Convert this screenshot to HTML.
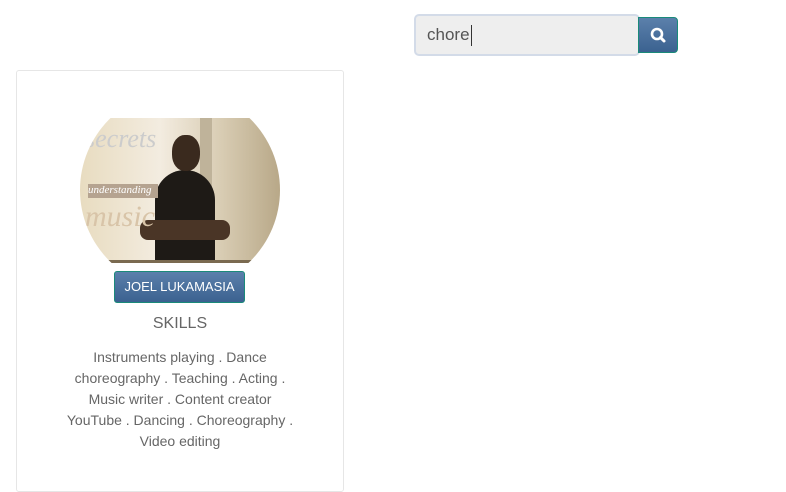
<!DOCTYPE html>
<html><head><style>
body{margin:0;width:786px;height:467px;background:#fff;font-family:"Liberation Sans",sans-serif;position:relative;overflow:hidden}
.inp{position:absolute;left:414px;top:14px;width:222px;height:38px;border:2px solid #d3dbe8;border-radius:5px;background:#eee;}
.inp span{position:absolute;left:11px;top:9px;font-size:17px;color:#555;}
.inp i{position:absolute;left:55px;top:9px;width:1px;height:21px;background:#333}
.btn{position:absolute;left:638px;top:17px;width:40px;height:36px;background:linear-gradient(#5b80ab,#3b6290);border:1px solid #1a8a7a;border-radius:0 4px 4px 0;box-sizing:border-box}
.card{position:absolute;left:16px;top:70px;width:326px;height:420px;border:1px solid #e6e6e6;border-radius:3px}
.pic{position:absolute;left:80px;top:118px;width:200px;height:145px;overflow:hidden}
.circ{position:absolute;left:0;top:-28px;width:200px;height:200px;border-radius:50%;overflow:hidden;background:linear-gradient(90deg,#e8dcc0,#f3ece0 40%,#d9cdb4 70%,#b8a888)}
.name{position:absolute;left:114px;top:271px;width:131px;height:32px;background:linear-gradient(#5b80ab,#3b6290);border:1px solid #1a8a7a;border-radius:3px;box-sizing:border-box;color:#fff;font-size:13px;text-align:center;line-height:30px}
.sk{position:absolute;left:16px;width:328px;text-align:center;color:#666;white-space:nowrap}
</style></head><body>
<div class="inp"><span>chore</span><i></i></div>
<div class="btn"><svg width="40" height="36" viewBox="0 0 40 36"><circle cx="18" cy="16" r="5" fill="none" stroke="#fff" stroke-width="2.6"/><line x1="21.5" y1="19.5" x2="25" y2="23" stroke="#fff" stroke-width="3" stroke-linecap="round"/></svg></div>
<div class="card"></div>
<div class="pic"><div class="circ">
<div style="position:absolute;left:120px;top:0;width:12px;height:200px;background:#bfb39a"></div>
<div style="position:absolute;left:75px;top:80px;width:60px;height:120px;background:#1e1a16;border-radius:30px 30px 0 0"></div>
<div style="position:absolute;left:92px;top:45px;width:28px;height:36px;background:#3a2a1e;border-radius:45%"></div>
<div style="position:absolute;left:60px;top:130px;width:90px;height:20px;background:#4a3526;border-radius:8px"></div>
<div style="position:absolute;left:0;top:170px;width:200px;height:30px;background:#7a6a50"></div>
<div style="position:absolute;left:8px;top:94px;width:70px;height:14px;background:#b5a390;color:#fff;font:italic 11px 'Liberation Serif',serif">understanding</div>
<div style="position:absolute;left:5px;top:110px;color:#d8c4a8;font:italic 30px 'Liberation Serif',serif">music</div>
<div style="position:absolute;left:5px;top:34px;color:#ccc;font:italic 26px 'Liberation Serif',serif">secrets</div>
</div></div>
<div class="name">JOEL LUKAMASIA</div>
<div class="sk" style="top:315px;font-size:16px;">SKILLS</div>
<div class="sk" style="top:347px;font-size:14px;line-height:21px;">Instruments playing . Dance<br>choreography . Teaching . Acting .<br>Music writer . Content creator<br>YouTube . Dancing . Choreography .<br>Video editing</div>
</body></html>
